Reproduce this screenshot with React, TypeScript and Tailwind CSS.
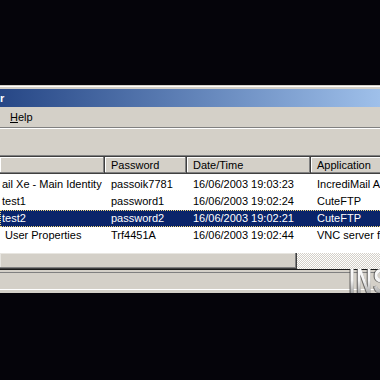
const rows = [
  { name: "ail Xe - Main Identity", pad: "pl-[1px]", pass: "passoik7781", date: "16/06/2003 19:03:23", app: "IncrediMail Application", selected: false },
  { name: "test1", pad: "pl-[1px]", pass: "password1", date: "16/06/2003 19:02:24", app: "CuteFTP", selected: false },
  { name: "test2", pad: "pl-[1px]", pass: "password2", date: "16/06/2003 19:02:21", app: "CuteFTP", selected: true },
  { name: "User Properties", pad: "pl-[4px]", pass: "Trf4451A", date: "16/06/2003 19:02:44", app: "VNC server for Windows", selected: false },
];

const headerCell = "h-[17px] shrink-0 bg-[#d4d0c8] leading-[17px] pl-[6px] shadow-[inset_-1px_-1px_#404040,inset_-2px_-2px_#808080,inset_1px_1px_#ffffff]";

export default function App() {
  return (
    <div
      className="relative w-[380px] h-[380px] overflow-hidden bg-[#05040a] text-[11px] text-black"
      style={{ fontFamily: '"Liberation Sans", Arial, sans-serif' }}
    >
      <div className="h-[85px]" />

      {/* window frame top */}
      <div className="h-[1px] bg-[#d4d0c8]" />
      <div className="h-[1px] bg-white" />
      <div className="h-[2px] bg-[#d4d0c8]" />

      {/* title bar */}
      <div className="h-[18px] bg-gradient-to-r from-[#274786] to-[#9fc0ea] flex items-center">
        <span className="font-bold text-white leading-none">r</span>
      </div>

      {/* menu bar */}
      <div className="h-[20px] bg-[#d4d0c8] flex items-center pl-[10px]">
        <span><span className="underline">H</span>elp</span>
      </div>
      <div className="h-[1px] bg-[#808080]" />
      <div className="h-[1px] bg-white" />

      {/* toolbar */}
      <div className="h-[26px] bg-[#d4d0c8]" />

      {/* list view */}
      <div className="h-[1px] bg-[#808080]" />
      <div className="h-[1px] bg-[#404040]" />
      <div className="bg-white">
        <div className="flex w-[460px]">
          <div className={`${headerCell} w-[105px]`} />
          <div className={`${headerCell} w-[82px]`}>Password</div>
          <div className={`${headerCell} w-[124px]`}>Date/Time</div>
          <div className={`${headerCell} w-[149px]`}>Application</div>
        </div>
        <div className="h-[79px] pt-[2px]">
          {rows.map((r, i) => (
            <div
              key={i}
              className={`flex w-[460px] h-[17px] leading-[15px] border border-dotted ${
                r.selected ? "bg-[#0a246a] text-white border-[#f0d77a]" : "border-transparent"
              }`}
            >
              <div className={`w-[104px] shrink-0 overflow-hidden whitespace-nowrap ${r.pad}`}>{r.name}</div>
              <div className="w-[82px] shrink-0 pl-[6px] whitespace-nowrap">{r.pass}</div>
              <div className="w-[124px] shrink-0 pl-[6px] whitespace-nowrap">{r.date}</div>
              <div className="w-[149px] shrink-0 pl-[6px] whitespace-nowrap">{r.app}</div>
            </div>
          ))}
        </div>
        {/* horizontal scrollbar */}
        <div className="flex h-[16px]">
          <div className="w-[297px] bg-[#d4d0c8] shadow-[inset_-1px_-1px_#404040,inset_-2px_-2px_#808080,inset_1px_1px_#e8e6e1]" />
          <div className="flex-1 bg-[repeating-conic-gradient(#d4d0c8_0_25%,#ffffff_0_50%)] bg-[length:2px_2px]" />
        </div>
      </div>
      <div className="h-[1px] bg-[#1a1a1a]" />

      {/* status bar */}
      <div className="h-[2px] bg-[#d4d0c8]" />
      <div className="h-[1px] bg-[#808080]" />
      <div className="h-[16px] bg-[#d4d0c8]" />
      <div className="h-[1px] bg-white" />
      <div className="h-[3px] bg-[#d4d0c8]" />

      {/* watermark logo */}
      <div
        className="absolute left-[349px] top-[263px] origin-left scale-x-[0.62] text-[35px] font-bold leading-none tracking-[2px] bg-gradient-to-b from-white via-[#f4f4f4] to-[#8c8c8c] bg-clip-text text-transparent drop-shadow-[-1px_0_#2a2a2a]"
        style={{ fontFamily: '"Liberation Sans", Arial, sans-serif' }}
      >
        INS
      </div>
    </div>
  );
}
